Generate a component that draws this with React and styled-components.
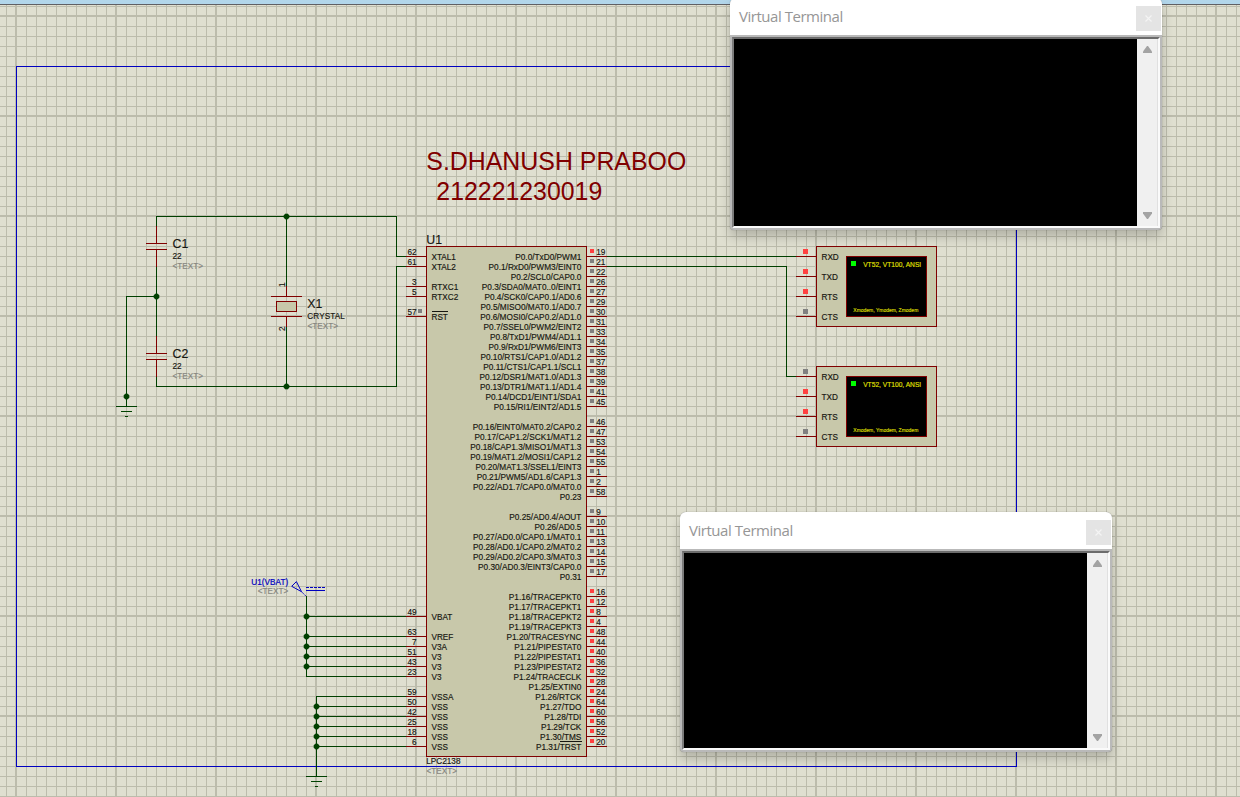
import React from "react";
import styled, { createGlobalStyle } from "styled-components";

const C = {
  paper: "#dfdfd0",
  grid: "#bcbcac",
  sheet: "#0000c0",
  wire: "#004000",
  part: "#800000",
  body: "#c8c8aa",
  hi: "#ff4040",
  float: "#808080",
  probe: "#0000c0",
  ink: "#161610",
  hint: "#868680",
};

const GlobalStyle = createGlobalStyle`
  body { margin: 0; overflow: hidden; }
  * { box-sizing: border-box; }
`;

const Desktop = styled.div`
  position: relative;
  display: flex;
  flex-direction: column;
  width: 1240px;
  height: 797px;
  overflow: hidden;
  background: ${C.paper};
`;

const TopStrip = styled.div`
  height: 5px;
  flex: none;
  background: #b2d6ea;
  border-bottom: 1px solid #606064;
`;

const Canvas = styled.svg`
  display: block;
  flex: none;
  font-family: "Liberation Sans", Arial, sans-serif;
  font-size: 8.2px;
`;

const Wire = styled.path`
  fill: none;
  stroke: ${(p) => p.$color || C.wire};
  stroke-width: 1;
  shape-rendering: crispEdges;
`;

const PartLine = styled(Wire)`
  stroke: ${C.part};
`;

const Body = styled.rect`
  fill: ${(p) => p.$fill || C.body};
  stroke: ${C.part};
  shape-rendering: crispEdges;
`;

const Label = styled.text`
  fill: ${(p) => p.$color || C.ink};
  stroke: ${(p) => p.$color || C.ink};
  stroke-width: ${(p) => p.$weight ?? 0.15};
  font-size: ${(p) => p.$size || 8.2}px;
  text-anchor: ${(p) => (p.$end ? "end" : "start")};
  white-space: pre;
`;

const State = styled.rect`
  fill: ${(p) => p.$color};
  shape-rendering: crispEdges;
`;

const Sheet = styled.rect`
  fill: none;
  stroke: ${C.sheet};
  shape-rendering: crispEdges;
`;

const leftPins = [
  ["62", "XTAL1", 256], ["61", "XTAL2", 266], ["3", "RTXC1", 286], ["5", "RTXC2", 296],
  ["57", "RST", 316], ["49", "VBAT", 616], ["63", "VREF", 636], ["7", "V3A", 646],
  ["51", "V3", 656], ["43", "V3", 666], ["23", "V3", 676], ["59", "VSSA", 696],
  ["50", "VSS", 706], ["42", "VSS", 716], ["25", "VSS", 726], ["18", "VSS", 736], ["6", "VSS", 746],
];

const rightGroups = [
  [256, [
    ["19", "P0.0/TxD0/PWM1"], ["21", "P0.1/RxD0/PWM3/EINT0"], ["22", "P0.2/SCL0/CAP0.0"],
    ["26", "P0.3/SDA0/MAT0..0/EINT1"], ["27", "P0.4/SCK0/CAP0.1/AD0.6"], ["29", "P0.5/MISO0/MAT0.1/AD0.7"],
    ["30", "P0.6/MOSI0/CAP0.2/AD1.0"], ["31", "P0.7/SSEL0/PWM2/EINT2"], ["33", "P0.8/TxD1/PWM4/AD1.1"],
    ["34", "P0.9/RxD1/PWM6/EINT3"], ["35", "P0.10/RTS1/CAP1.0/AD1.2"], ["37", "P0.11/CTS1/CAP1.1/SCL1"],
    ["38", "P0.12/DSR1/MAT1.0/AD1.3"], ["39", "P0.13/DTR1/MAT1.1/AD1.4"], ["41", "P0.14/DCD1/EINT1/SDA1"],
    ["45", "P0.15/RI1/EINT2/AD1.5"],
  ]],
  [426, [
    ["46", "P0.16/EINT0/MAT0.2/CAP0.2"], ["47", "P0.17/CAP1.2/SCK1/MAT1.2"], ["53", "P0.18/CAP1.3/MISO1/MAT1.3"],
    ["54", "P0.19/MAT1.2/MOSI1/CAP1.2"], ["55", "P0.20/MAT1.3/SSEL1/EINT3"], ["1", "P0.21/PWM5/AD1.6/CAP1.3"],
    ["2", "P0.22/AD1.7/CAP0.0/MAT0.0"], ["58", "P0.23"],
  ]],
  [516, [
    ["9", "P0.25/AD0.4/AOUT"], ["10", "P0.26/AD0.5"], ["11", "P0.27/AD0.0/CAP0.1/MAT0.1"],
    ["13", "P0.28/AD0.1/CAP0.2/MAT0.2"], ["14", "P0.29/AD0.2/CAP0.3/MAT0.3"], ["15", "P0.30/AD0.3/EINT3/CAP0.0"],
    ["17", "P0.31"],
  ]],
  [596, [
    ["16", "P1.16/TRACEPKT0"], ["12", "P1.17/TRACEPKT1"], ["8", "P1.18/TRACEPKT2"], ["4", "P1.19/TRACEPKT3"],
    ["48", "P1.20/TRACESYNC"], ["44", "P1.21/PIPESTAT0"], ["40", "P1.22/PIPESTAT1"], ["36", "P1.23/PIPESTAT2"],
    ["32", "P1.24/TRACECLK"], ["28", "P1.25/EXTIN0"], ["24", "P1.26/RTCK"], ["64", "P1.27/TDO"],
    ["60", "P1.28/TDI"], ["56", "P1.29/TCK"], ["52", "P1.30/TMS"], ["20", "P1.31/TRST"],
  ]],
];

const rightPins = rightGroups.flatMap(([start, pins]) =>
  pins.map(([num, name], i) => ({
    num,
    name,
    y: start + i * 10,
    color: start === 596 || num === "19" ? C.hi : C.float,
  }))
);

function Junction({ x, y }) {
  return (
    <path
      d={`M${x - 1} ${y - 2}h3v1h1v3h-1v1h-3v-1h-1v-3h1z`}
      fill={C.wire}
      stroke={C.wire}
      strokeWidth="0.6"
    />
  );
}

function Ground({ x, y }) {
  return <Wire d={`M${x - 10} ${y + 0.5}h21M${x - 5} ${y + 5.5}h11M${x - 1} ${y + 10.5}h3`} />;
}

function Capacitor({ y, name }) {
  return (
    <g>
      <PartLine d={`M156.5 ${y}v17M156.5 ${y + 24}v17M146 ${y + 17.5}h21M146 ${y + 23.5}h21`} />
      <Label x="172.5" y={y + 22} $size={12.3}>{name}</Label>
      <Label x="172.5" y={y + 33}>22</Label>
      <Label x="172.5" y={y + 43} $color={C.hint}>&lt;TEXT&gt;</Label>
    </g>
  );
}

function Crystal() {
  return (
    <g>
      <PartLine d="M286.5 286v10M271 296.5h31M271 316.5h31M286.5 317v10" />
      <Body x="276.5" y="301.5" width="20" height="10" />
      <Label transform="translate(285 287) rotate(-90)">1</Label>
      <Label transform="translate(285 331) rotate(-90)">2</Label>
      <Label x="307.3" y="308" $size={12.3}>X1</Label>
      <Label x="307.3" y="319" textLength="37.5">CRYSTAL</Label>
      <Label x="307.5" y="329" $color={C.hint}>&lt;TEXT&gt;</Label>
    </g>
  );
}

function Chip() {
  return (
    <g>
      <Body x="426.5" y="246.5" width="160" height="510" />
      <Label x="426.3" y="244" $size={12.3}>U1</Label>
      {leftPins.map(([num, name, y]) => (
        <g key={num}>
          <PartLine d={`M406 ${y + 0.5}h20`} />
          <Label x="416.5" y={y - 1} $end>{num}</Label>
          <Label x="431.5" y={y + 4}>{name}</Label>
        </g>
      ))}
      {rightPins.map(({ num, name, y, color }) => (
        <g key={num}>
          <PartLine d={`M587 ${y + 0.5}h20`} />
          <State x="590" y={y - 7} width="4" height="4" $color={color} />
          <Label x="596.3" y={y - 1}>{num}</Label>
          <Label x="581.4" y={y + 4} $size={8.28} $end>{name}</Label>
        </g>
      ))}
      <State x="418" y="309" width="4" height="4" $color={C.float} />
      <Wire d="M431.5 311.5h16.5M560 741.5h21.5" $color={C.ink} />
      <Label x="426.3" y="764">LPC2138</Label>
      <Label x="426.5" y="774" $color={C.hint}>&lt;TEXT&gt;</Label>
    </g>
  );
}

function TerminalPart({ y, states }) {
  return (
    <g>
      <Body x="816.5" y={y + 0.5} width="120" height="80" />
      <Body x="846.5" y={y + 10.5} width="80" height="60" $fill="#000" />
      {["RXD", "TXD", "RTS", "CTS"].map((name, i) => (
        <g key={name}>
          <PartLine d={`M796 ${y + 10.5 + i * 20}h20`} />
          <State x="803" y={y + 3 + i * 20} width="5" height="5" $color={states[i] ? C.hi : C.float} />
          <Label x="821.5" y={y + 14 + i * 20}>{name}</Label>
        </g>
      ))}
      <State x="851" y={y + 15} width="5" height="5" $color="#00ff00" />
      <Label x="863.2" y={y + 21} $size={6.9} $color="#e0e000" textLength="58" lengthAdjust="spacingAndGlyphs">
        VT52, VT100, ANSI
      </Label>
      <Label x="853.3" y={y + 65.8} $size={5} $color="#d8d800" textLength="65">Xmodem, Ymodem, Zmodem</Label>
    </g>
  );
}

function Schematic() {
  return (
    <Canvas width="1240" height="792" viewBox="0 5 1240 792">
      <defs>
        <pattern id="minor" x="6" y="6" width="10" height="10" patternUnits="userSpaceOnUse">
          <path d="M0 0h10v1H1v9H0z" fill={C.grid} />
        </pattern>
        <pattern id="major" x="15" y="15" width="100" height="100" patternUnits="userSpaceOnUse">
          <path d="M0 0h100v2H2v98H0z" fill={C.grid} />
        </pattern>
      </defs>
      <rect y="5" width="1240" height="792" fill="url(#minor)" />
      <rect y="5" width="1240" height="792" fill="url(#major)" />
      <Sheet x="16.5" y="66.5" width="1000" height="700" />

      <Label x="426.3" y="170" $size={25} $weight={0} $color={C.part} textLength="260" lengthAdjust="spacingAndGlyphs">
        S.DHANUSH PRABOO
      </Label>
      <Label x="436.3" y="200" $size={25} $weight={0} $color={C.part} textLength="166" lengthAdjust="spacingAndGlyphs">
        212221230019
      </Label>

      <Wire d="M156.5 226V216.5H396.5V256.5H406M406 266.5H396.5V386.5H156.5V376" />
      <Wire d="M286.5 217V286M286.5 326V386M156.5 266V336M156 296.5H126.5V406" />
      <Wire d="M607 256.5H796M607 266.5H786.5V376.5H796" />
      <Wire d="M306.5 596V676.5H406M306 616.5H406M306 636.5H406M306 646.5H406M306 656.5H406M306 666.5H406" />
      <Wire d="M406 696.5H316.5V776M316 706.5H406M316 716.5H406M316 726.5H406M316 736.5H406M316 746.5H406" />

      <Capacitor y={226} name="C1" />
      <Capacitor y={336} name="C2" />
      <Crystal />
      <Ground x={126} y={406} />
      <Ground x={316} y={776} />
      <Chip />
      <TerminalPart y={246} states={[1, 1, 1, 0]} />
      <TerminalPart y={366} states={[0, 1, 1, 0]} />

      {[[286, 216], [286, 386], [156, 296], [126, 396]].map(([x, y]) => (
        <Junction key={`${x}-${y}`} x={x} y={y} />
      ))}
      {[616, 636, 646, 656, 666].map((y) => <Junction key={y} x={306} y={y} />)}
      {[706, 716, 726, 736, 746].map((y) => <Junction key={y} x={316} y={y} />)}

      <g fill="none" stroke={C.probe}>
        <path d="M291.7 586.3L296.4 581.6L301.5 591.7Z" />
        <path d="M301.5 591.7L306 596.2" strokeDasharray="1.5 .7" />
        <path d="M306 587.5h19" strokeDasharray="3 1" />
        <path d="M306 590.5h19" />
      </g>
      <Label x="288.3" y="585" $end $color={C.probe} $weight={0.2} textLength="37">U1(VBAT)</Label>
      <Label x="288.3" y="594" $end $color={C.hint}>&lt;TEXT&gt;</Label>
    </Canvas>
  );
}

const Window = styled.section`
  position: absolute;
  left: ${(p) => p.$x}px;
  top: ${(p) => p.$y}px;
  width: 432px;
  height: ${(p) => p.$h}px;
  display: flex;
  flex-direction: column;
  overflow: hidden;
  border-radius: 6px 6px 4px 4px;
  background: #b9b9b9;
  box-shadow: 0 0 1px rgba(0, 0, 0, 0.45), 0 7px 12px rgba(0, 0, 0, 0.2);
`;

const TitleBar = styled.header`
  display: flex;
  flex: none;
  justify-content: space-between;
  align-items: flex-start;
  height: 37px;
  padding: 8px 1px 0 9px;
  background: #fff;
`;

const Title = styled.span`
  margin-top: -1px;
  font: 15px/22px "Open Sans", "Noto Sans", sans-serif;
  letter-spacing: -0.47px;
  color: #969696;
  white-space: nowrap;
`;

const CloseButton = styled.button`
  display: flex;
  align-items: center;
  justify-content: center;
  width: 25px;
  height: 25px;
  padding: 0;
  border: 0;
  background: #e4e4e4;
`;

const Frame = styled.div`
  display: flex;
  flex: 1;
  margin: 2px;
  border-style: solid;
  border-width: 2px;
  border-color: #6c6c6c #fafafa #fafafa #7c7c7c;
`;

const Screen = styled.div`
  flex: 1;
  background: #000;
`;

const ScrollBar = styled.div`
  display: flex;
  flex-direction: column;
  justify-content: space-between;
  align-items: center;
  width: 21px;
  padding: 7px 0;
  background: #f0f0f0;
  border-right: 1px solid #e0e0e0;
`;

const Arrow = styled.svg`
  display: block;
  transform: ${(p) => (p.$down ? "rotate(180deg)" : "none")};
`;

function VirtualTerminal({ x, y, h }) {
  return (
    <Window $x={x} $y={y} $h={h}>
      <TitleBar>
        <Title>Virtual Terminal</Title>
        <CloseButton aria-label="Close">
          <svg width="7" height="7" viewBox="0 0 7 7">
            <path d="M.5 .5l6 6M6.5 .5l-6 6" stroke="#f4f4f4" strokeWidth="1.2" />
          </svg>
        </CloseButton>
      </TitleBar>
      <Frame>
        <Screen />
        <ScrollBar>
          {[false, true].map((down) => (
            <Arrow key={String(down)} width="9" height="7" viewBox="0 0 9 7" $down={down}>
              <path d="M4 0h1L9 5.5V7H0V5.5z" fill="#a3a3a3" />
            </Arrow>
          ))}
        </ScrollBar>
      </Frame>
    </Window>
  );
}

export default function App() {
  return (
    <Desktop>
      <GlobalStyle />
      <TopStrip />
      <Schematic />
      <VirtualTerminal x={730} y={-2} h={232} />
      <VirtualTerminal x={680} y={512} h={240} />
    </Desktop>
  );
}
